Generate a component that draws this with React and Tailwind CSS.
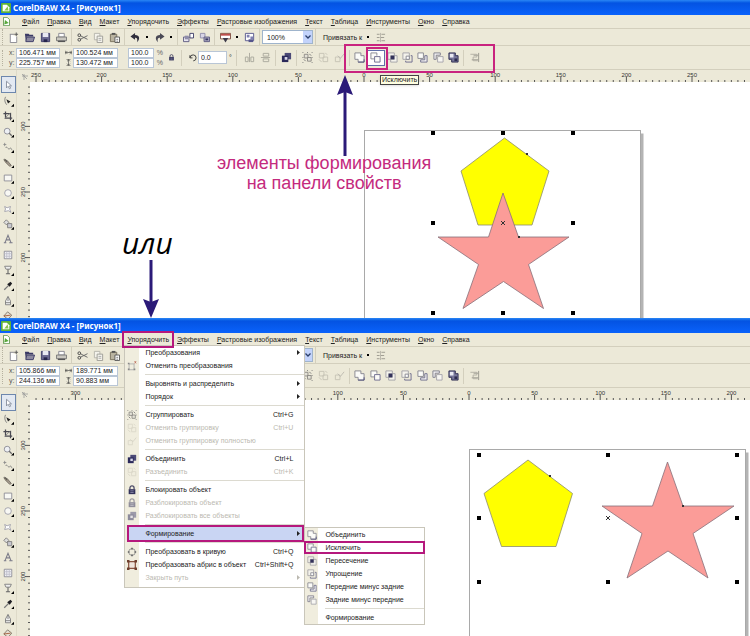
import clsx from 'clsx';

const MENUS = ['Файл', 'Правка', 'Вид', 'Макет', 'Упорядочить', 'Эффекты', 'Растровые изображения', 'Текст', 'Таблица', 'Инструменты', 'Окно', 'Справка'];

const TOOLS = ['pick', 'shape', 'crop', 'zoom', 'freehand', 'smartFill', 'rect', 'ellipse', 'polygon', 'basic', 'text', 'table', 'blend', 'dropper', 'outline', 'fill'];

const SHAPING = [
  { icon: 'weld', label: 'Объединить' },
  { icon: 'trim', label: 'Исключить' },
  { icon: 'intersect', label: 'Пересечение' },
  { icon: 'simplify', label: 'Упрощение' },
  { icon: 'frontMinus', label: 'Передние минус задние' },
  { icon: 'backMinus', label: 'Задние минус передние' },
];

const ARRANGE = [
  [{ label: 'Преобразования', sub: true }, { label: 'Отменить преобразования', icon: 'clear' }],
  [{ label: 'Выровнять и распределить', sub: true }, { label: 'Порядок', sub: true }],
  [
    { label: 'Сгруппировать', icon: 'group', keys: 'Ctrl+G' },
    { label: 'Отменить группировку', icon: 'ungroup', keys: 'Ctrl+U', off: true },
    { label: 'Отменить группировку полностью', icon: 'ungroupAll', off: true },
  ],
  [{ label: 'Объединить', icon: 'combine', keys: 'Ctrl+L' }, { label: 'Разъединить', icon: 'ungroup', keys: 'Ctrl+K', off: true }],
  [
    { label: 'Блокировать объект', icon: 'lock' },
    { label: 'Разблокировать объект', icon: 'lock', off: true },
    { label: 'Разблокировать все объекты', icon: 'combine', off: true },
  ],
  [{ label: 'Формирование', sub: true, open: true }],
  [
    { label: 'Преобразовать в кривую', icon: 'curve', keys: 'Ctrl+Q' },
    { label: 'Преобразовать абрис в объект', icon: 'outlineObj', keys: 'Ctrl+Shift+Q' },
    { label: 'Закрыть путь', sub: true, off: true },
  ],
];

const G = '#85858f';
const N = '#3b3a66';

const ICONS = {
  app: <><rect width="12" height="12" rx="1" fill="#5fb336" /><path d="M2 2h5l3 3v5H2z" fill="#fff" /><path d="M4 9l4-5 1 5z" fill="#8bc34a" /></>,
  doc: <><path d="M2 .5h5l3 3v8H2z" fill="#fff" stroke="#4b8a35" /><path d="M3 10l1-6 5 4z" fill="#58a83a" /></>,
  new: <><path d="M2 2.500h5M9.500 5v6.500H2.500V2.500" fill="#fff" stroke={G} /><path d="M9 .5v4M7 2.500h4" stroke="#555" /></>,
  open: <><path d="M1 2h4l1 1h4v2H3l-1 5z" fill={N} /><path d="M3 5.500h8.500L10 10.500H2z" fill="#8d8aa0" stroke={N} /></>,
  save: <><path d="M1.500 1.500h9v9h-9z" fill="#6a6890" stroke={N} /><path d="M3 1h6v4.500H3z" fill="#e9e9f2" /><path d="M4 8h4v3H4z" fill="#25244c" /></>,
  print: <><path d="M3 1.500h6v4H3z" fill="#fff" stroke={G} /><path d="M.5 5.500h11v4H.5z" fill="#c9c7c0" stroke="#777" /><path d="M2 9.500h8v1.500H2z" fill="#555" /></>,
  cut: <><path d="M3.500 4l8 4M3.500 8l8-4" stroke="#666" /><circle cx="2.500" cy="3.500" r="1.500" fill="none" stroke="#444" /><circle cx="2.500" cy="8.500" r="1.500" fill="none" stroke="#444" /></>,
  copy: <><path d="M1.500 1.500h6v7h-6z" fill="#f4f3ec" stroke="#b5b3ab" /><path d="M4.500 4.500h6v7h-6z" fill="#f4f3ec" stroke="#9d9b95" /><path d="M6 7h3M6 9h3" stroke="#aaa" /></>,
  paste: <><path d="M1.500 2.500h7v8h-7z" fill="#b9b3a0" stroke="#77705c" /><path d="M3 1h4v2H3z" fill="#555" /><path d="M6.500 5.500h5v6h-5z" fill="#fff" stroke="#555" /><path d="M8 8h2M8 10h2" stroke="#777" /></>,
  undo: <path d="M5.500 1L.5 4.800l5 3.700V6.200c2 0 3 .8 2.200 5C11 8 11 3.500 5.500 3.300z" fill="#2f2e3c" />,
  redo: <path d="M6.500 1l5 3.800-5 3.700V6.200c-2 0-3 .8-2.200 5C1 8 1 3.500 6.500 3.300z" fill="#4a4955" />,
  import: <><path d="M.5 5.500h6v5h-6z" fill="#e8e6f0" stroke="#5c5a80" /><path d="M2 4h4v4H2z" fill="#8f8daa" /><path d="M7.500 1.500h4v5h-4z" fill="#fff" stroke={N} /></>,
  export: <><path d="M1.500 1.500h5v5h-5z" fill="#d8d5e6" stroke="#8f8daa" /><path d="M5.500 5.500h6v5h-6z" fill="#a9a7bf" stroke="#5c5a80" /><path d="M7 7h3v2H7z" fill={N} /></>,
  launch: <><path d="M.5 1.500h11v6H.5z" fill="#fff" stroke="#7b4a3a" /><path d="M1 2h10v2H1z" fill="#c0504d" /><path d="M3 6.500h6l-3 5z" fill="#3c3a4a" /></>,
  welcome: <><path d="M1.500 1.500h9v8h-9z" fill="#fff" stroke="#55558c" /><path d="M3 3h3v3H3zM7 5h3v3H7z" fill="#8080b0" /><path d="M5 8h5v3H5z" fill="#55558c" /></>,
  snap: <><path d="M2 2.500h3M2 6h3M2 9.500h3M7 2.500h4M6 6h4M7 9.500h4" stroke="#99978c" /><path d="M6 1v10" stroke="#b8b6aa" /></>,
  width: <path d="M.5 3v6M11.500 3v6M1 6h10M4 3.500L1.500 6 4 8.500M8 3.500L10.500 6 8 8.500" fill="none" stroke="#333" />,
  height: <path d="M2.500.5h7M2.500 11.500h7M6 1v10M3.500 4L6 1.500 8.500 4M3.500 8L6 10.500 8.500 8" fill="none" stroke="#333" />,
  lock: <><path d="M3.500 5V3.500a2.500 2.500 0 015 0V5" fill="none" stroke="#4b4a66" strokeWidth="1.500" /><path d="M2 5h8v6H2z" fill="#33325a" /><path d="M4 7h4M4 9h4" stroke="#8d8cab" /></>,
  rotate: <path d="M2.500 3v3.500H6M2.800 6.200a4 4 0 114.200 4.300" fill="none" stroke="#333" strokeWidth="1.200" />,
  mirrorH: <><path d="M1.500 5.500h3v5h-3zM7.500 5.500h3v5h-3z" fill="none" stroke="#aaa89c" /><path d="M6 1v10" stroke="#aaa89c" /></>,
  mirrorV: <><path d="M3.500 1.500h6v3h-6zM3.500 7.500h6v3h-6z" fill="none" stroke="#aaa89c" /><path d="M1 6h10" stroke="#aaa89c" /></>,
  combine: <><path d="M4 1h7v7H4z" fill="#4b4976" /><path d="M1 4h7v7H1z" fill="#2a295a" /><path d="M4 5.500h3v3H4z" fill="#d9d8ea" /></>,
  group: <><path d="M2.500 2.500h4v4h-4zM6 6h4v4H6z" fill="#e4e2d8" stroke="#8c8a84" /><path d="M.5.5h1M10.500.5h1M.5 11.500h1M10.500 11.500h1M5.500.5h1M.5 6h1M10.500 6h1M8 2l2 2M2 8l2 2" stroke="#777" /></>,
  ungroup: <><path d="M1.500 1.500h5v5h-5zM5.500 5.500h5v5h-5z" fill="none" stroke="#c6c3b5" /><path d="M8 1l2 2M1 8l3 3" stroke="#c6c3b5" /></>,
  ungroupAll: <><path d="M1.500 5.500h5v5h-5z" fill="none" stroke="#c6c3b5" /><path d="M4 4l3 3 4-5" fill="none" stroke="#bdbab0" /></>,
  clear: <><path d="M2.500 3.500h6v7h-6z" fill="none" stroke="#aaa" /><path d="M1 2h2v2H1zM8 9h2v2H8zM1 9h2v2H1z" fill="#888" /><path d="M9 0l2 3M11 0L9 3" stroke="#b0503c" strokeWidth=".7" /></>,
  weld: <><path d="M1 1h6.500v3H11v7H4.500V8H1z" fill="#fbfbf8" stroke={G} /><path d="M4.500 11H11V8" fill="none" stroke="#4d4c78" /></>,
  trim: <><path d="M4.500 7.500H1V1h6.500v3" fill="#fbfbf8" stroke={G} /><path d="M5 5h6v6H5z" fill="#fbfbf8" stroke="#6b6a8c" /></>,
  intersect: <><path d="M1 1h7v7H1zM4 4h7v7H4z" fill="#f4f3ec" stroke="#a3a2a6" /><path d="M4 4h4v4H4z" fill="#33325a" /></>,
  simplify: <><path d="M1 1h7v7H1z" fill="#f4f3ec" stroke="#a3a2a6" /><path d="M4.500 4.500H8V8H4.500z" fill="#fff" stroke={G} /><path d="M9.500 4H11v7H4V9.500" fill="none" stroke="#6b6a8c" /></>,
  frontMinus: <><path d="M1 1h6v6H1z" fill="#fbfbf8" stroke={G} /><path d="M8.500 4H11v7H4V8.500h4.500z" fill="#f0eff0" stroke="#6f6e8c" /></>,
  backMinus: <><path d="M1 1h7v2.500H3.500V8H1z" fill="#f0eff0" stroke="#7f7e8c" /><path d="M5 5h6v6H5z" fill="#f7f6f2" stroke="#a4a3aa" /></>,
  boundary: <><path d="M1 1h7v3h3v7H4V8H1z" fill="#77769a" stroke="#2c2b50" /><path d="M2 2h4v4H2z" fill="#e9e9f2" /><path d="M7 7h3v3H7z" fill="#2c2b50" /></>,
  align: <><path d="M10.500 1v10M5 3.500h5M3 8.500h7" stroke="#99978c" /><path d="M1.500 2.500h7v3h-4v4h5" fill="none" stroke="#b0aea3" /></>,
  curve: <><circle cx="6" cy="6" r="4" fill="none" stroke="#888" /><path d="M5 1h2v2H5zM5 9h2v2H5zM1 5h2v2H1zM9 5h2v2H9z" fill="#666" /></>,
  outlineObj: <><path d="M2 2h8v8H2z" fill="#efe6dc" stroke="#8a5540" strokeWidth="1.500" /><path d="M0 0h3v3H0zM9 0h3v3H9zM0 9h3v3H0zM9 9h3v3H9z" fill="#6d3f2e" /></>,
  pick: <path d="M3 1.500v8l2-2 1.500 3 1.500-.7L6.500 7H9z" fill="#fff" stroke="#7d8594" />,
  shape: <><path d="M3 1C1.500 4 2 8 4.500 10.500" fill="none" stroke="#777" /><path d="M4 4l5 2.500L6 9z" fill="#222" /></>,
  crop: <><path d="M3 .5V8.500h8M.5 3H9v8" fill="none" stroke="#4a4a52" strokeWidth="1.500" /><path d="M2 9l7-7" stroke="#777" /></>,
  zoom: <><circle cx="5" cy="5" r="3.500" fill="#eef0f4" stroke="#85858f" /><path d="M7.500 7.500l3 3" stroke="#666" strokeWidth="1.500" /></>,
  freehand: <><path d="M2 1v4M.5 3h3.500" stroke="#888" /><path d="M3 7c2-3 3 3 5 1s2 1 3 2" fill="none" stroke="#777" /></>,
  smartFill: <><path d="M1 2l4 1 5 6-2 1-5-5z" fill="#a59b8d" stroke="#6b655c" /><path d="M2 1l3 4" stroke="#444" /></>,
  rect: <path d="M1.500 2.500h9v7h-9z" fill="#f8f8f4" stroke="#85858f" />,
  ellipse: <circle cx="6" cy="6" r="4" fill="#f8f8f4" stroke="#9a9aa6" />,
  polygon: <path d="M2 3l3 1.500L9 3 8 6l1.500 4-3-2L2 9l1-3z" fill="#fff" stroke="#9a9aa6" />,
  basic: <><path d="M4 1l3 3-3 3-3-3z" fill="#ddd" stroke="#777" /><path d="M5.500 5.500h5v5h-5z" fill="#c9c9d2" stroke="#777" /></>,
  text: <path d="M1 10.500h3M7.500 10.500h4M2.500 10L6 1.500 9.500 10M3.500 7h5" fill="none" stroke="#7d7d8a" strokeWidth="1.300" />,
  table: <><path d="M1.500 1.500h9v9h-9z" fill="#f2f2f6" stroke="#85858f" /><path d="M1.500 4.500h9M1.500 7.500h9M4.500 2v8M7.500 2v8" stroke="#bdbdc8" /></>,
  blend: <><path d="M2 1.500h8L8.500 5h-5z" fill="#eee" stroke="#777" /><path d="M6 5v5M3.500 10.500h5" stroke="#666" strokeWidth="1.300" /></>,
  dropper: <><path d="M1.500 10.500l5-5" stroke="#777" strokeWidth="1.500" /><path d="M5 4l3 3 3-4-2-2z" fill="#1d1d22" /></>,
  outline: <path d="M6 .5L3 6v4.500h6V6zM6 1v5M3 8h6" fill="#eee" stroke="#777" />,
  fill: <><path d="M5.500 1l5 4-4.500 5-5-4z" fill="#e4dfd2" stroke="#7b7060" /><path d="M1 6l8-1" stroke="#a0522d" /></>,
};

function Icon({ name, className }) {
  return (
    <svg viewBox="0 0 12 12" className={clsx('shrink-0', className || 'size-[11px]')} aria-hidden="true">
      {ICONS[name]}
    </svg>
  );
}

function Tool({ icon, label, className, children }) {
  return (
    <button aria-label={label || icon} className={clsx('flex h-4 shrink-0 items-center justify-center', className || 'w-4')}>
      {icon && <Icon name={icon} />}
      {children}
    </button>
  );
}

const More = () => (
  <button aria-label="Ещё" className="flex h-4 w-2 shrink-0 items-center justify-center">
    <span className="size-[2px] bg-black" />
  </button>
);

const Sep = () => <span className="mx-[2px] h-4 w-px shrink-0 bg-[#d3cfbd]" />;

const Grip = () => <span className="ml-[2px] h-4 w-px shrink-0 border-l border-dotted border-[#b5b19f]" />;

function Field({ label, value, className }) {
  return (
    <input
      aria-label={label}
      defaultValue={value}
      className={clsx('block border border-[#b9c6d6] bg-white px-[2px] text-[7px] leading-none text-[#222] outline-none', className)}
    />
  );
}

function TitleBar() {
  return (
    <div className="flex h-[15px] items-center gap-[2px] bg-linear-to-b from-[#2a86f5] via-[#0453e2] via-20% to-[#0a62fb] pl-px">
      <Icon name="app" className="size-[10px]" />
      <span className="font-['Noto_Sans'] text-[8px] leading-none font-bold text-white">CorelDRAW X4 - [Рисунок1]</span>
    </div>
  );
}

function MenuBar({ openMenu }) {
  return (
    <div className="flex h-[14px] items-center gap-2 border-b border-[#d3cfbd] pl-[2px]">
      <Icon name="doc" className="mr-[3px] size-[9px]" />
      {MENUS.map((m) => (
        <div key={m} className="relative">
          <button className="block whitespace-nowrap">
            <span className="underline">{m[0]}</span>{m.slice(1)}
          </button>
          {openMenu === m && (
            <>
              <span className="pointer-events-none absolute -inset-x-[5px] -inset-y-1 z-20 border-2 border-[#b5187d]" />
              <ArrangeMenu />
            </>
          )}
        </div>
      ))}
    </div>
  );
}

function MenuItem({ item, children }) {
  return (
    <li className="relative">
      <button
        disabled={item.off}
        className={clsx('flex h-[13px] w-full items-center whitespace-nowrap', item.off ? 'text-[#bbb9b0]' : 'text-[#222]')}
      >
        <span className="flex w-[14px] shrink-0 justify-center">
          {item.icon && <Icon name={item.icon} className={clsx('size-[10px]', item.off && 'opacity-50')} />}
        </span>
        <span className="z-10 ml-[6px] flex-1 text-left">{item.label}</span>
        <span className="z-10 mr-[11px]">{item.keys}</span>
        {item.sub && (
          <svg viewBox="0 0 3 5" className="z-10 mr-[4px] h-[5px] w-[3px]"><path d="M0 0l3 2.500L0 5z" fill="currentColor" /></svg>
        )}
      </button>
      {children}
    </li>
  );
}

const MenuLine = () => <li className="ml-5 flex h-[5px] items-center"><span className="h-px w-full bg-[#dcdad0]" /></li>;

function ArrangeMenu() {
  return (
    <ul className="absolute top-full -left-[3px] z-10 mt-px w-[181px] border border-[#c9c6ba] bg-[linear-gradient(to_right,#f0edde_14px,#fff_14px)] pb-[3px]">
      {ARRANGE.map((section, i) => (
        <li key={i}>
          <ul>
            {i > 0 && <MenuLine />}
            {section.map((item) => (
              <MenuItem key={item.label} item={item}>
                {item.open && (
                  <>
                    <span className="pointer-events-none absolute inset-x-[2px] -inset-y-[2px] right-0 border-2 border-[#b5187d] bg-[#c9d5f3]" />
                    <ShapingMenu />
                  </>
                )}
              </MenuItem>
            ))}
          </ul>
        </li>
      ))}
    </ul>
  );
}

function ShapingMenu() {
  return (
    <ul className="absolute top-0 left-full w-[121px] border border-[#c9c6ba] bg-[linear-gradient(to_right,#f0edde_13px,#fff_13px)]">
      {SHAPING.map((item) => (
        <MenuItem key={item.label} item={item}>
          {item.icon === 'trim' && (
            <span className="pointer-events-none absolute -inset-x-px inset-y-0 border-2 border-[#b5187d]" />
          )}
        </MenuItem>
      ))}
      <MenuLine />
      <MenuItem item={{ label: 'Формирование' }} />
    </ul>
  );
}

function StandardBar() {
  return (
    <div className="flex h-[17px] items-center border-b border-[#d3cfbd]">
      <Grip />
      <span className="w-[2px]" />
      <Tool icon="new" />
      <Tool icon="open" />
      <Tool icon="save" />
      <Tool icon="print" />
      <Sep />
      <Tool icon="cut" />
      <Tool icon="copy" />
      <Tool icon="paste" />
      <Sep />
      <Tool icon="undo" />
      <More />
      <Tool icon="redo" />
      <More />
      <Sep />
      <Tool icon="import" />
      <Tool icon="export" />
      <Sep />
      <Tool icon="launch" />
      <More />
      <Tool icon="welcome" />
      <Sep />
      <div className="relative">
        <select aria-label="Масштаб" className="block h-[14px] w-[51px] appearance-none border border-[#9fb4cc] bg-white pl-1 text-[7px] leading-none outline-none">
          <option>100%</option>
        </select>
        <span className="pointer-events-none absolute top-px right-px flex h-3 w-[9px] items-center justify-center bg-[#c3d3fb]">
          <svg viewBox="0 0 6 4" className="h-1 w-[6px]"><path d="M.5.5L3 3 5.500.5" fill="none" stroke="#2b3f6b" strokeWidth="1.300" /></svg>
        </span>
      </div>
      <Sep />
      <button className="mr-[2px] ml-[5px] whitespace-nowrap">Привязать к</button>
      <More />
      <Tool icon="snap" />
    </div>
  );
}

function PropertyBar({ x, y, w, h, pressed }) {
  return (
    <div className="flex h-6 items-center border-b border-[#d3cfbd]">
      <Grip />
      <div className="ml-[6px] flex w-[7px] flex-col leading-[10px] text-[#555]">
        <span>x:</span>
        <span>y:</span>
      </div>
      <div>
        <Field label="x" value={x} className="h-[10px] w-11" />
        <Field label="y" value={y} className="h-[10px] w-11" />
      </div>
      <div className="flex w-[13px] flex-col items-center gap-[3px] pl-[3px]">
        <Icon name="width" className="size-[7px]" />
        <Icon name="height" className="size-[7px]" />
      </div>
      <div>
        <Field label="Ширина" value={w} className="h-[10px] w-[45px]" />
        <Field label="Высота" value={h} className="h-[10px] w-[45px]" />
      </div>
      <span className="w-[10px]" />
      <div>
        <Field label="Масштаб по ширине" value="100.0" className="h-[10px] w-[26px]" />
        <Field label="Масштаб по высоте" value="100.0" className="h-[10px] w-[26px]" />
      </div>
      <div className="flex w-[9px] flex-col items-end leading-[10px] text-[#666]">
        <span>%</span>
        <span>%</span>
      </div>
      <Tool label="Сохранять пропорции"><Icon name="lock" className="size-[7px]" /></Tool>
      <Sep />
      <Icon name="rotate" className="mr-px ml-1 size-[9px]" />
      <Field label="Угол поворота" value="0.0" className="h-[13px] w-[29px]" />
      <span className="w-[7px] pl-[2px]">°</span>
      <Sep />
      <Tool icon="mirrorH" className="ml-[2px] w-4" />
      <Tool icon="mirrorV" />
      <Sep />
      <Tool icon="combine" />
      <Sep />
      <Tool icon="group" />
      <Tool icon="ungroup" />
      <Tool icon="ungroupAll" />
      <Sep />
      <div className="flex w-[109px] items-center">
        {SHAPING.map((s) => (
          <Tool
            key={s.icon}
            icon={s.icon}
            label={s.label}
            className={clsx('flex-1', pressed === s.icon && 'border border-[#5f6fa8] bg-white')}
          />
        ))}
        <Tool icon="boundary" label="Граница" className="flex-1" />
      </div>
      <Sep />
      <Tool icon="align" />
    </div>
  );
}

// a tick every 5 units, a label every 50; `zero` is where the scale reads 0
function Ruler({ zero, from, to, vertical }) {
  const step = 6.56;
  const ticks = [];
  for (let i = from; i <= to; i++) ticks.push(i);
  return (
    <svg className="block size-full" aria-hidden="true">
      {ticks.map((i) => {
        const p = zero + i * step;
        const major = i % 10 === 0;
        return vertical ? (
          <g key={i}>
            <path d={`M${major ? 8 : 11} ${p}h5`} stroke="#555" />
            {major && (
              <text transform={`translate(8 ${p}) rotate(-90)`} textAnchor="middle" fontSize="6" fill="#333">{Math.abs(i * 5)}</text>
            )}
          </g>
        ) : (
          <g key={i}>
            <path d={`M${p} ${major ? 7 : 10}v5`} stroke="#555" />
            {major && <text x={p} y="7" textAnchor="middle" fontSize="6" fill="#333">{Math.abs(i * 5)}</text>}
          </g>
        );
      })}
    </svg>
  );
}

function Drawing({ page, pentagon, star, nodes, xs, ys }) {
  return (
    <svg className="block size-full" role="img" aria-label="Рисунок1">
      <rect x={page.x + 276} y={page.y + 3} width="3" height="400" fill="#b4b4b4" />
      <rect x={page.x} y={page.y} width="276" height="400" fill="#fff" stroke="#a9a9a9" />
      <polygon points={pentagon} fill="#ffff00" stroke="#8c8c6e" strokeWidth=".8" />
      <polygon points={star} fill="#fb9c98" stroke="#86707a" strokeWidth=".8" />
      {nodes.map(([x, y]) => <rect key={x} x={x - 1} y={y - 1} width="2" height="2" fill="#333" />)}
      {ys.map((y, r) => xs.map((x, c) => (
        r === 1 && c === 1
          ? <path key={x} d={`M${x - 2} ${y - 2}l4 4M${x + 2} ${y - 2}l-4 4`} stroke="#333" />
          : <rect key={x} x={x - 2} y={y - 2} width="4" height="4" fill="#000" />
      )))}
    </svg>
  );
}

function CorelWindow({ openMenu, fields, pressed, zeroX, zeroY, from, drawing, children }) {
  return (
    <section className="relative bg-[#ece9d8] text-[7px] leading-[9px] text-[#222]">
      <TitleBar />
      <MenuBar openMenu={openMenu} />
      <StandardBar />
      <PropertyBar {...fields} pressed={pressed} />
      <div className="flex h-[248px] overflow-hidden">
        <div className="flex h-[254px] w-[17px] shrink-0 flex-col border-r border-[#dedac8] pt-[6px]">
          {TOOLS.map((t, i) => (
            <button
              key={t}
              aria-label={t}
              className={clsx('relative flex flex-1 items-center justify-center', i === 0 && 'ml-px border border-[#6d87ad] bg-[#e3e9f2]')}
            >
              <Icon name={t} className="size-[10px]" />
              {![0, 10, 11].includes(i) && <span className="absolute right-[2px] bottom-[2px] size-[3px] bg-black [clip-path:polygon(100%_0,100%_100%,0_100%)]" />}
            </button>
          ))}
        </div>
        <div className="grid min-w-0 flex-1 grid-cols-[13px_1fr] grid-rows-[12px_236px]">
          <svg viewBox="0 0 13 12" aria-hidden="true"><path d="M5 6h6M7 4v6M5 4l5 5" stroke="#999" fill="none" strokeWidth=".8" /></svg>
          <div className="min-w-0 overflow-hidden"><Ruler zero={zeroX} from={from} to={59} /></div>
          <div className="overflow-hidden"><Ruler zero={zeroY} from={-66} to={-31} vertical /></div>
          <div className="min-w-0 overflow-hidden bg-white"><Drawing {...drawing} /></div>
        </div>
      </div>
      {children}
    </section>
  );
}

const TOP = {
  page: { x: 334.5, y: 48.5 },
  pentagon: '474.500,56 519,89 502,143 448,143 431,89',
  star: '473,111 488.500,155 539,155 498.500,182.500 513.500,226.500 473.500,199.500 433,226.500 448.500,182.500 408,155 458.500,155',
  nodes: [[497, 72], [489, 155]],
  xs: [403, 473, 543],
  ys: [51, 141, 231],
};

const BOTTOM = {
  page: { x: 439.5, y: 49.5 },
  pentagon: '498,60 542.500,93.500 526,146.500 471.500,146.500 454,93.500',
  star: '637.500,62 653,106 704,106 663,133.500 678,178 638,151 597,178 612,133.500 572,106 622.500,106',
  nodes: [[520, 76], [653, 106]],
  xs: [449, 578, 707],
  ys: [55, 118, 182],
};

export default function App() {
  return (
    <main className="overflow-hidden font-['Liberation_Sans',sans-serif]">
      <CorelWindow
        fields={{ x: '106.471 мм', y: '225.757 мм', w: '100.524 мм', h: '130.472 мм' }}
        pressed="trim"
        zeroX={334}
        zeroY={438}
        from={-50}
        drawing={TOP}
      >
        <span className="absolute top-11 left-[344px] h-[29px] w-[151px] border-2 border-[#c9237f]" />
        <span className="absolute top-[47px] left-[366px] h-[23px] w-[22px] border-2 border-[#c9237f]" />
        <span role="tooltip" className="absolute top-[75px] left-[380px] border border-[#444] bg-[#ffffe1] px-px leading-[8px] shadow">Исключить</span>
        <svg className="absolute top-[75px] left-[336px] h-[81px] w-[18px]" viewBox="0 0 18 81">
          <path d="M9 0l8 20-8-3-8 3z" fill="#2b1a78" /><path d="M9 12v69" stroke="#2b1a78" strokeWidth="3" />
        </svg>
        <p className="absolute top-[153px] left-[217px] text-center text-[18px] leading-5 whitespace-nowrap text-[#c42a7e]">
          элементы формирования<br />на панели свойств
        </p>
        <p className="absolute top-[225px] left-[122px] font-['Open_Sans',sans-serif] text-[30px] leading-9 text-black italic">или</p>
        <svg className="absolute top-[260px] left-[142px] h-[58px] w-[18px]" viewBox="0 0 18 58">
          <path d="M9 58l8-19-8 3-8-3z" fill="#2b1a78" /><path d="M9 0v46" stroke="#2b1a78" strokeWidth="3" />
        </svg>
      </CorelWindow>
      <CorelWindow
        openMenu="Упорядочить"
        fields={{ x: '105.866 мм', y: '244.136 мм', w: '189.771 мм', h: '90.883 мм' }}
        zeroX={439}
        zeroY={439}
        from={-66}
        drawing={BOTTOM}
      />
    </main>
  );
}
